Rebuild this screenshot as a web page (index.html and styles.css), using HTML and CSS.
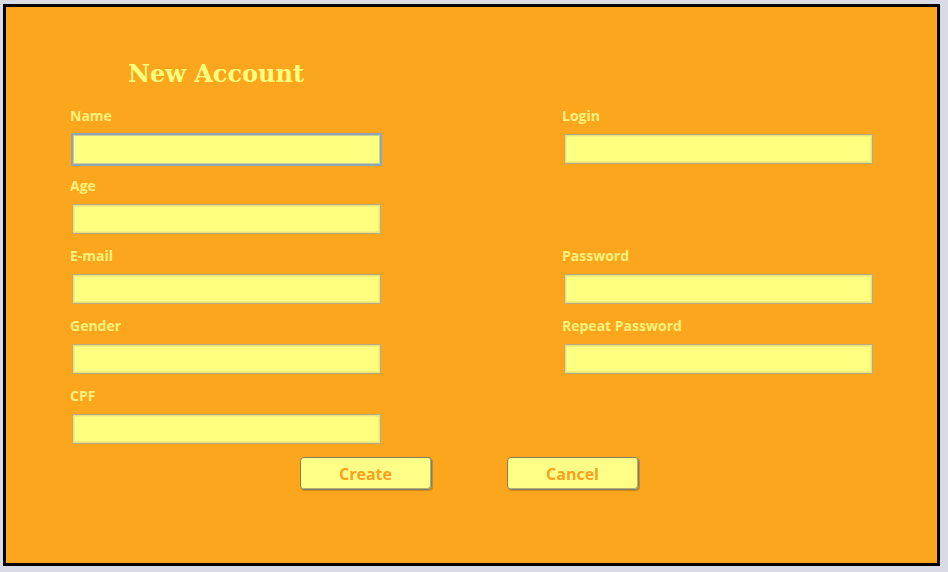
FILE: index.html
```html
<!DOCTYPE html>
<html lang="en">

<head>
  <meta charset="UTF-8">
  <meta name="viewport" content="width=device-width, initial-scale=1.0">
  <title>New Account</title>
  <link rel="stylesheet" href="styles.css">
</head>

<body>

  <div class="window">
    <h1 class="title">New Account</h1>

    <form class="account-form">
      <div class="field">
        <label for="name">Name</label>
        <input type="text" id="name" class="focused" autofocus>
      </div>
      <div class="field">
        <label for="login">Login</label>
        <input type="text" id="login">
      </div>

      <div class="field">
        <label for="age">Age</label>
        <input type="text" id="age">
      </div>
      <div class="field empty"></div>

      <div class="field">
        <label for="email">E-mail</label>
        <input type="text" id="email">
      </div>
      <div class="field">
        <label for="password">Password</label>
        <input type="password" id="password">
      </div>

      <div class="field">
        <label for="gender">Gender</label>
        <input type="text" id="gender">
      </div>
      <div class="field">
        <label for="repeat">Repeat Password</label>
        <input type="password" id="repeat">
      </div>

      <div class="field">
        <label for="cpf">CPF</label>
        <input type="text" id="cpf">
      </div>
    </form>

    <div class="actions">
      <button type="button" class="button">Create</button>
      <button type="button" class="button">Cancel</button>
    </div>
  </div>

</body>

</html>
```

FILE: styles.css
```css
body {
  margin: 0;
  padding: 4px 8px 6px 3px;
  background-color: #d8dbe3;
  font-family: "Open Sans", "Noto Sans", sans-serif;
}

.window {
  height: 556px;
  border: 3px solid #000;
  background-color: #fca61e;
  box-sizing: content-box;
}

.title {
  margin: 0;
  padding: 53px 0 0 122px;
  height: 99px;
  box-sizing: border-box;
  font-family: "DejaVu Serif", serif;
  font-size: 24px;
  line-height: 28px;
  font-weight: bold;
  color: #ffff7d;
}

.account-form {
  display: grid;
  grid-template-columns: 492px 312px;
  padding-left: 64px;
}

.field {
  display: flex;
  flex-direction: column;
  height: 70px;
}

.field label {
  height: 20px;
  line-height: 20px;
  font-size: 14px;
  font-weight: bold;
  color: #fff27a;
}

.field input {
  margin: 8px 0 0 2px;
  width: 309px;
  height: 30px;
  box-sizing: border-box;
  background-color: #ffff80;
  border: 1px solid #b8ad80;
  box-shadow: inset 0 0 0 1px #e8e27a, inset 0 0 0 2px #f5f17c;
  outline: none;
  caret-color: #e08a10;
  padding: 0 4px;
  font-family: inherit;
  font-size: 14px;
}

.field input.focused {
  margin: 7px 0 0 1px;
  width: 311px;
  height: 33px;
  border: 2px solid #8da5b5;
  box-shadow: inset 0 0 0 1px #c6cf9a;
}

.actions {
  display: flex;
  justify-content: center;
  gap: 75px;
  margin-top: 1px;
  padding-right: 5px;
}

.button {
  width: 132px;
  height: 33px;
  background-color: #ffff88;
  border: 1px solid #857d62;
  border-radius: 4px;
  box-shadow: inset -1px -1px 0 #b5ad7c, 1px 1px 0 rgba(120, 90, 20, 0.35);
  color: #f9a11b;
  font-family: "Open Sans", "Noto Sans", sans-serif;
  font-size: 16px;
  font-weight: bold;
  cursor: pointer;
}
```
